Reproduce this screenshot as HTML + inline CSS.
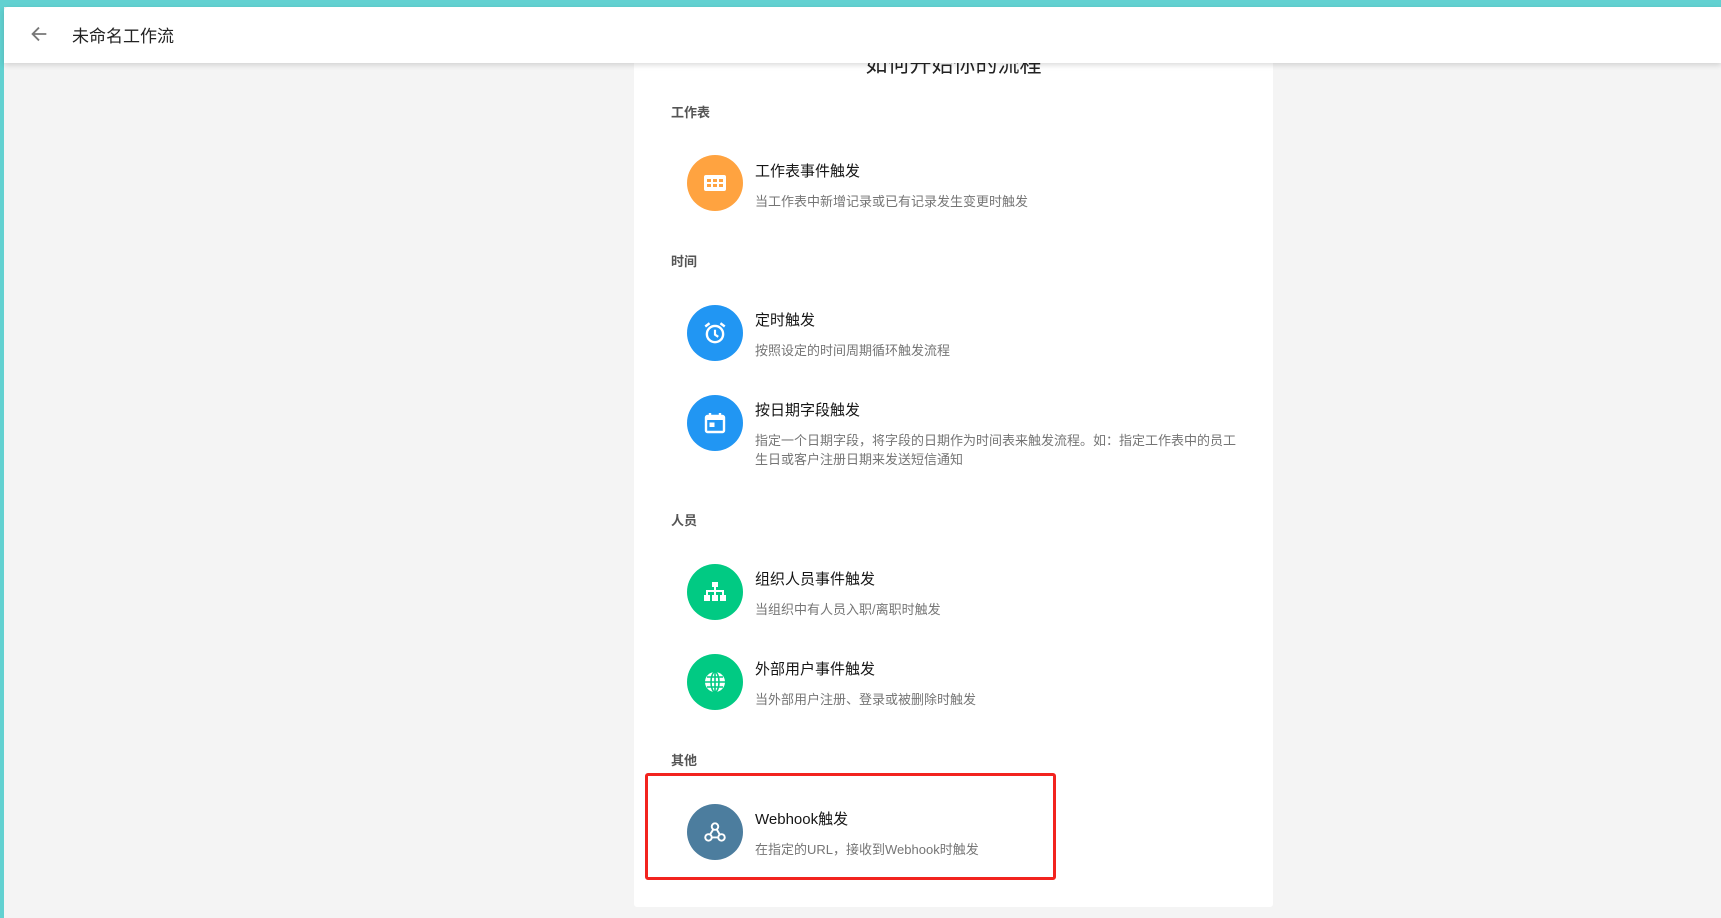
<!DOCTYPE html>
<html><head><meta charset="utf-8"><style>
*{margin:0;padding:0;box-sizing:border-box}
body{width:1721px;height:918px;overflow:hidden;background:#f4f4f4;font-family:"Liberation Sans","Noto Sans CJK SC",sans-serif;position:relative}
.top{position:absolute;left:0;top:0;width:1721px;height:7px;background:#62d1d1}
.lb{position:absolute;left:0;top:0;width:4px;height:918px;background:#62d1d1}
.hdr{position:absolute;left:4px;top:7px;width:1717px;height:56px;background:#fff;box-shadow:0 2px 6px rgba(0,0,0,.15);z-index:5;border-top-left-radius:4px}
.hdr .t{position:absolute;left:68px;top:15px;font-size:17px;color:#222}
.card{position:absolute;left:634px;top:40px;width:639px;height:867px;background:#fff;border-radius:3px}
.h1{position:absolute;left:634px;width:639px;text-align:center;top:47px;font-size:22px;color:#222}
.sec{position:absolute;left:671px;font-size:13px;color:#555;font-weight:bold}
.ic{position:absolute;left:687px;width:56px;height:56px;border-radius:50%;display:flex;align-items:center;justify-content:center}
.tt{position:absolute;left:755px;font-size:15px;color:#151515}
.ds{position:absolute;left:755px;width:490px;font-size:13px;color:#757575;line-height:19px}
.red{position:absolute;left:645px;top:773px;width:411px;height:107px;border:3px solid #f2231f;border-radius:3px}
</style></head><body>
<div class="top"></div><div class="lb"></div>
<div class="card"></div>
<div class="h1">如何开始你的流程</div>
<div class="hdr">
<svg style="position:absolute;left:24px;top:16px" width="22" height="22" viewBox="0 0 24 24"><path d="M20 12H5M12 5l-7 7 7 7" fill="none" stroke="#777" stroke-width="2"/></svg>
<div class="t">未命名工作流</div></div>

<div class="sec" style="top:102px">工作表</div>
<div class="ic" style="top:155px;background:#ffa340"><svg width="24" height="18" viewBox="0 0 24 18"><rect x="1" y="1" width="22" height="16" rx="2" fill="#fff"/><g fill="#ffa340"><rect x="4" y="5" width="4" height="3"/><rect x="10" y="5" width="4" height="3"/><rect x="16" y="5" width="4" height="3"/><rect x="4" y="10" width="4" height="3"/><rect x="10" y="10" width="4" height="3"/><rect x="16" y="10" width="4" height="3"/></g></svg></div>
<div class="tt" style="top:160px">工作表事件触发</div>
<div class="ds" style="top:192px">当工作表中新增记录或已有记录发生变更时触发</div>

<div class="sec" style="top:251px">时间</div>
<div class="ic" style="top:305px;background:#2196f3"><svg width="26" height="26" viewBox="0 0 24 24"><circle cx="12" cy="13" r="7.5" fill="none" stroke="#fff" stroke-width="2.2"/><path d="M12 9v4.5l3 2" fill="none" stroke="#fff" stroke-width="2"/><path d="M3 6l4-3M21 6l-4-3" stroke="#fff" stroke-width="2.2"/></svg></div>
<div class="tt" style="top:309px">定时触发</div>
<div class="ds" style="top:341px">按照设定的时间周期循环触发流程</div>

<div class="ic" style="top:395px;background:#2196f3"><svg width="24" height="24" viewBox="0 0 24 24"><rect x="3" y="5" width="18" height="16" rx="1.5" fill="none" stroke="#fff" stroke-width="2.4"/><rect x="3" y="5" width="18" height="4" fill="#fff"/><path d="M7 2v4M17 2v4" stroke="#fff" stroke-width="2.4"/><rect x="6.5" y="11.5" width="5" height="4.5" fill="#fff"/></svg></div>
<div class="tt" style="top:399px">按日期字段触发</div>
<div class="ds" style="top:431px">指定一个日期字段，将字段的日期作为时间表来触发流程。如：指定工作表中的员工生日或客户注册日期来发送短信通知</div>

<div class="sec" style="top:510px">人员</div>
<div class="ic" style="top:564px;background:#01ca83"><svg width="24" height="22" viewBox="0 0 24 22"><rect x="9" y="1" width="6" height="5" fill="#fff"/><path d="M12 6v4M4 14v-4h16v4M12 10v4" stroke="#fff" stroke-width="2" fill="none"/><rect x="1" y="14" width="6" height="6" fill="#fff"/><rect x="9" y="14" width="6" height="6" fill="#fff"/><rect x="17" y="14" width="6" height="6" fill="#fff"/></svg></div>
<div class="tt" style="top:568px">组织人员事件触发</div>
<div class="ds" style="top:600px">当组织中有人员入职/离职时触发</div>

<div class="ic" style="top:654px;background:#01ca83"><svg width="24" height="24" viewBox="0 0 24 24"><circle cx="12" cy="12" r="10" fill="#fff"/><g stroke="#01ca83" stroke-width="1.6" fill="none"><ellipse cx="12" cy="12" rx="4" ry="10"/><path d="M2 12h20M4 7h16M4 17h16M12 2v20"/></g></svg></div>
<div class="tt" style="top:658px">外部用户事件触发</div>
<div class="ds" style="top:690px">当外部用户注册、登录或被删除时触发</div>

<div class="sec" style="top:750px">其他</div>
<div class="ic" style="top:804px;background:#4c7d9e"><svg width="26" height="26" viewBox="0 0 24 24" fill="none" stroke="#fff" stroke-width="1.8"><circle cx="12" cy="7" r="3"/><circle cx="6" cy="17" r="3"/><circle cx="18" cy="17" r="3"/><path d="M10.5 9.5L7 15M9 17h6M13.5 9.5l3 5"/></svg></div>
<div class="tt" style="top:808px">Webhook触发</div>
<div class="ds" style="top:840px">在指定的URL，接收到Webhook时触发</div>
<div class="red"></div>
</body></html>
